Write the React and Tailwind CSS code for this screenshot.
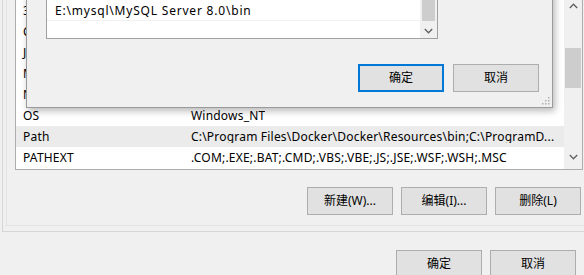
import React from "react";

const rows = [
  ["3", ""],
  ["ComSpec", ""],
  ["JAVA_HOME", ""],
  ["MAVEN_HOME", ""],
  ["NUMBER_OF_PROCESSORS", ""],
  ["OS", "Windows_NT"],
  ["Path", "C:\\Program Files\\Docker\\Docker\\Resources\\bin;C:\\ProgramD..."],
  ["PATHEXT", ".COM;.EXE;.BAT;.CMD;.VBS;.VBE;.JS;.JSE;.WSF;.WSH;.MSC"],
];

function ChevronUp() {
  return (
    <svg width="9" height="6" viewBox="0 0 9 6">
      <path d="M0.8 5 L4.5 1.2 L8.2 5" fill="none" stroke="#606060" strokeWidth="1.3" />
    </svg>
  );
}
function ChevronDown() {
  return (
    <svg width="9" height="6" viewBox="0 0 9 6">
      <path d="M0.8 1 L4.5 4.8 L8.2 1" fill="none" stroke="#606060" strokeWidth="1.3" />
    </svg>
  );
}

function Btn({ children, focused, className = "" }) {
  return (
    <div
      className={
        "flex h-[28px] w-[86px] items-center justify-center bg-[#e1e1e1] text-[12px] text-black " +
        (focused ? "border-2 border-[#0078d7] " : "border border-[#adadad] ") +
        className
      }
    >
      {children}
    </div>
  );
}

export default function App() {
  return (
    <div
      className="relative h-[275px] w-[584px] overflow-hidden bg-[#f0f0f0] text-[12px] text-black"
      style={{ fontFamily: "'Noto Sans', 'Noto Sans CJK SC', sans-serif" }}
    >
      {/* group box */}
      <div className="ml-[2px] h-[232px] w-[582px] border-b border-l border-[#d6d6d6]">
        <div className="ml-[3px] flex h-[226px] flex-col border-b border-l border-[#e2e2e2]">
          {/* list view */}
          <div className="ml-[8px] flex h-[170px] w-[568px] border-b border-l border-r border-[#adadad] bg-white">
            <div className="min-w-0 flex-1 tracking-[0.2px]">
              {rows.map(([n, v], i) => (
                <div
                  key={i}
                  className={
                    "flex h-[21px] items-center whitespace-nowrap leading-none " +
                    (n === "Path" ? "bg-[#ebebeb]" : "")
                  }
                >
                  <div className="w-[168px] shrink-0 overflow-hidden pl-[7px]">{n}</div>
                  <div className="overflow-hidden pl-[7px]">{v}</div>
                </div>
              ))}
            </div>
            {/* scrollbar */}
            <div className="flex w-[18px] flex-col items-center bg-[#f0f0f0]">
              <div className="flex h-[12px] items-center justify-center">
                <ChevronUp />
              </div>
              <div className="mt-[36px] h-[40px] w-[16px] bg-[#cdcdcd]" />
              <div className="flex-1" />
              <div className="mb-[7px] flex h-[10px] items-center justify-center">
                <ChevronDown />
              </div>
            </div>
          </div>
          <div className="mr-[3px] mt-[17px] flex justify-end gap-[8px]">
            <Btn>新建(W)...</Btn>
            <Btn>编辑(I)...</Btn>
            <Btn>删除(L)</Btn>
          </div>
        </div>
      </div>

      {/* bottom buttons */}
      <div className="mr-[8px] mt-[18px] flex justify-end gap-[8px]">
        <Btn>确定</Btn>
        <Btn>取消</Btn>
      </div>

      {/* edit dialog overlay */}
      <div className="absolute left-[26px] top-[-10px] flex h-[118px] w-[527px] flex-col border border-[#9a9a9a] bg-[#f0f0f0] shadow-[2px_3px_7px_rgba(0,0,0,0.28)]">
        <div className="ml-[19px] flex h-[48px] w-[392px] border-b border-r border-l border-[#a0a0a0] bg-white">
          <div className="flex-1 pt-[10px]">
            <div className="flex h-[20px] items-center whitespace-nowrap border-b border-[#f0f0f0] pl-[8px] leading-none tracking-[0.8px]">
              E:\mysql\MySQL Server 8.0\bin
            </div>
          </div>
          <div className="flex w-[17px] flex-col items-center bg-[#f0f0f0]">
            <div className="h-[30px] w-[13px] bg-[#cdcdcd]" />
            <div className="mt-[7px] flex justify-center">
              <ChevronDown />
            </div>
          </div>
        </div>
        <div className="mr-[13px] mt-[25px] flex justify-end gap-[9px]">
          <Btn focused>确定</Btn>
          <Btn>取消</Btn>
        </div>
        <div className="flex-1" />
        <div className="mb-[2px] mr-[2px] flex justify-end">
          <svg width="8" height="8" viewBox="0 0 8 8">
            <rect x="6" y="0" width="1.5" height="1.5" fill="#b0b0b0" />
            <rect x="3" y="3" width="1.5" height="1.5" fill="#b0b0b0" />
            <rect x="6" y="3" width="1.5" height="1.5" fill="#b0b0b0" />
            <rect x="0" y="6" width="1.5" height="1.5" fill="#b0b0b0" />
            <rect x="3" y="6" width="1.5" height="1.5" fill="#b0b0b0" />
            <rect x="6" y="6" width="1.5" height="1.5" fill="#b0b0b0" />
          </svg>
        </div>
      </div>
    </div>
  );
}
